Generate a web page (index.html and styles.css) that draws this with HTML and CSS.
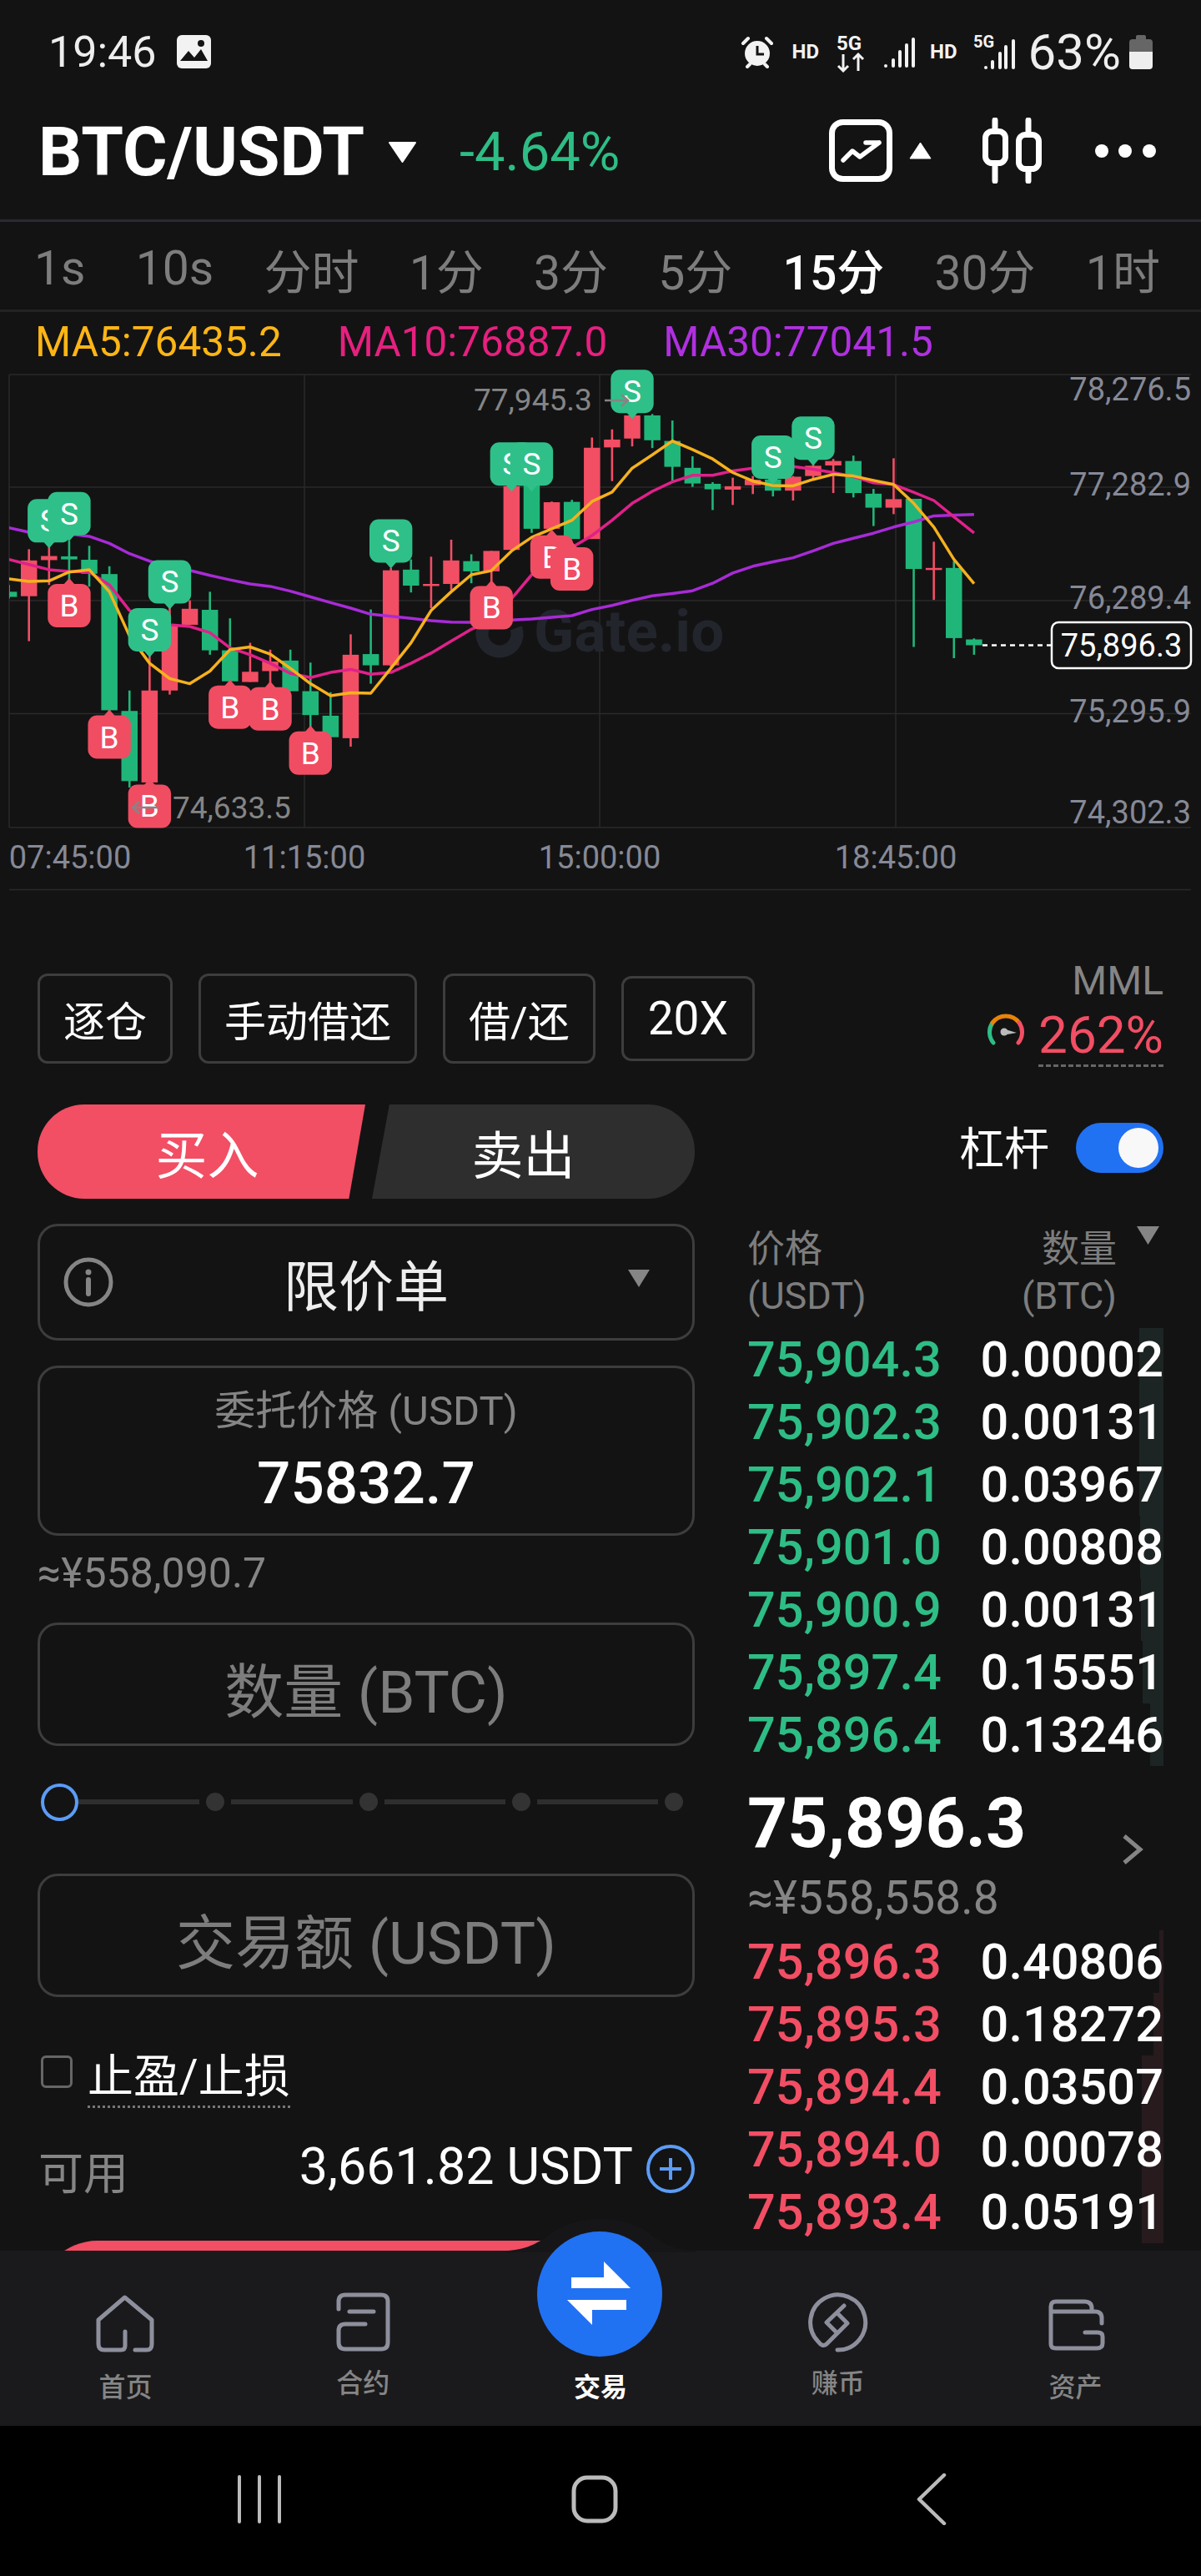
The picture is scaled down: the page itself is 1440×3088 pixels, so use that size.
FILE: index.html
```html
<!DOCTYPE html>
<html lang="zh">

<head>
    <meta charset="utf-8">
    <title>BTC/USDT</title>
    <link rel="stylesheet" href="styles.css">
</head>

<body>
    <div class="app">
        <div class="status-bar">
            <span class="status-time">19:46</span>
            <svg class="icon-gallery" width="41" height="40" viewBox="0 0 41 40">
                <rect width="41" height="40" rx="6" fill="#f2f2f2" />
                <path d="M4 31 L14 19 L21 27 L29 17 L37 31 Z" fill="#131314" />
                <circle cx="29" cy="10" r="4" fill="#131314" />
            </svg>
            <div class="status-right">
                <svg class="icon-alarm" width="40" height="40" viewBox="0 0 40 40">
                    <circle cx="20" cy="22" r="15" fill="#f2f2f2" />
                    <path d="M20 13 V23 H28" fill="none" stroke="#131314" stroke-width="3" />
                    <path d="M3 10 L9 4 M37 10 L31 4 M8 38 L11 35 M32 38 L29 35" stroke="#f2f2f2" stroke-width="4" stroke-linecap="round" />
                </svg>
                <span class="status-hd hd-first">HD</span>
                <svg class="net-first" width="36" height="52" viewBox="0 0 36 52">
                    <text class="net-label" x="1" y="24">5G</text>
                    <path d="M9 29 V49 M3 43 L9 49 L15 43 M27 49 V29 M21 35 L27 29 L33 35" fill="none" stroke="#f2f2f2" stroke-width="3" />
                </svg>
                <svg class="signal-first" width="40" height="37" viewBox="0 0 40 37" fill="#f2f2f2">
                    <rect x="2" y="32" width="4" height="4" rx="2" />
                    <rect x="11" y="25" width="4" height="11" rx="2" />
                    <rect x="19" y="15" width="4" height="21" rx="2" />
                    <rect x="27" y="7" width="4" height="29" rx="2" />
                    <rect x="35" y="0" width="4" height="36" rx="2" />
                </svg>
                <span class="status-hd hd-second">HD</span>
                <svg class="net-second" width="52" height="52" viewBox="0 0 52 52" fill="#f2f2f2">
                    <text class="net-label net-small" x="1" y="21">5G</text>
                    <rect x="14" y="43" width="4" height="4" rx="2" />
                    <rect x="22" y="36" width="4" height="11" rx="2" />
                    <rect x="31" y="26" width="4" height="21" rx="2" />
                    <rect x="38" y="18" width="4" height="29" rx="2" />
                    <rect x="47" y="11" width="4" height="36" rx="2" />
                </svg>
                <span class="status-battery">63%</span>
                <svg class="icon-battery" width="28" height="41" viewBox="0 0 28 41">
                    <path d="M8 5 V2 Q8 0 10 0 H18 Q20 0 20 2 V5 H24 Q28 5 28 9 V20 H0 V9 Q0 5 4 5 Z" fill="#666" />
                    <path d="M0 20 H28 V37 Q28 41 24 41 H4 Q0 41 0 37 Z" fill="#eee" />
                </svg>
            </div>
        </div>

        <div class="top-bar">
            <span class="pair-name">BTC/USDT</span>
            <svg class="pair-arrow" width="35" height="26" viewBox="0 0 35 26">
                <path d="M2 2 H33 L17.5 25 Z" fill="#fff" stroke="#fff" stroke-width="2" stroke-linejoin="round" />
            </svg>
            <span class="pair-change">-4.64%</span>
            <div class="top-actions">
                <svg width="76" height="75" viewBox="0 0 76 75">
                    <rect x="3.5" y="3.5" width="69" height="68" rx="13" fill="none" stroke="#fff" stroke-width="7" />
                    <path d="M17 49 L28 38 L37 45 L60 28 M44 28 H60" fill="none" stroke="#fff" stroke-width="5.5" stroke-linecap="round" stroke-linejoin="round" />
                </svg>
                <svg class="chart-arrow" width="27" height="21" viewBox="0 0 27 21">
                    <path d="M13.5 1 L26 20 H1 Z" fill="#fff" stroke="#fff" stroke-linejoin="round" />
                </svg>
                <svg class="candle-icon" width="72" height="79" viewBox="0 0 72 79">
                    <path d="M15 3 V76 M55 3 V76" stroke="#fff" stroke-width="7" stroke-linecap="round" />
                    <rect x="3.5" y="16.5" width="24" height="38" rx="8" fill="#131314" stroke="#fff" stroke-width="7" />
                    <rect x="43.5" y="20.5" width="24" height="41" rx="8" fill="#131314" stroke="#fff" stroke-width="7" />
                </svg>
                <svg class="more-icon" width="73" height="16" viewBox="0 0 73 16" fill="#fff">
                    <circle cx="8" cy="8" r="8" />
                    <circle cx="36" cy="8" r="8" />
                    <circle cx="65" cy="8" r="8" />
                </svg>
            </div>
        </div>

        <div class="period-bar">
            <span>1s</span>
            <span>10s</span>
            <span>分时</span>
            <span>1分</span>
            <span>3分</span>
            <span>5分</span>
            <span class="active">15分</span>
            <span>30分</span>
            <span>1时</span>
        </div>

        <div class="ma-row">
            <span class="ma5">MA5:76435.2</span>
            <span class="ma10">MA10:76887.0</span>
            <span class="ma30">MA30:77041.5</span>
        </div>

        <svg id="chart" class="chart" width="1440" height="640" viewBox="0 0 1440 640"></svg>

        <div class="trade">
            <div class="mode-row">
                <span class="mode-btn">逐仓</span>
                <span class="mode-btn">手动借还</span>
                <span class="mode-btn">借/还</span>
                <span class="mode-btn leverage">20X</span>
                <div class="mml">
                    <div class="mml-label">MML</div>
                    <div class="mml-value">
                        <svg class="mml-gauge" width="46" height="38" viewBox="0 0 46 38" fill="none" stroke-width="5" stroke-linecap="round">
                            <path d="M8 35 A20 20 0 0 1 7 11" stroke="#2ebd85" />
                            <path d="M7 11 A20 20 0 0 1 39 11" stroke="#e8830c" />
                            <path d="M39 11 A20 20 0 0 1 38 35" stroke="#f24e64" />
                            <path d="M19 18 L36 23 L19 26 Z" fill="#bbb" stroke="none" />
                            <circle cx="21" cy="22" r="4.5" fill="#bbb" stroke="none" />
                        </svg>
                        <span class="mml-percent">262%</span>
                    </div>
                </div>
            </div>

            <div class="trade-columns">
                <div class="form-col">
                    <div class="side-tabs">
                        <div class="side-tab buy">买入</div>
                        <div class="side-tab sell">卖出</div>
                    </div>

                    <div class="field order-type">
                        <svg class="info-icon" width="60" height="60" viewBox="0 0 60 60">
                            <circle cx="30" cy="30" r="27" fill="none" stroke="#858585" stroke-width="5" />
                            <circle cx="30" cy="18" r="3.5" fill="#858585" />
                            <path d="M30 27 V44" stroke="#858585" stroke-width="6" stroke-linecap="round" />
                        </svg>
                        <span class="order-type-name">限价单</span>
                        <svg class="order-type-arrow" width="28" height="23" viewBox="0 0 28 23">
                            <path d="M1 1 H27 L14 22 Z" fill="#858585" />
                        </svg>
                    </div>

                    <div class="field price-field">
                        <div class="price-label">委托价格 (USDT)</div>
                        <div class="price-value">75832.7</div>
                    </div>
                    <div class="price-hint">≈¥558,090.7</div>

                    <div class="field input-field">数量 (BTC)</div>

                    <div class="slider">
                        <span class="slider-handle"></span>
                        <span class="slider-seg"></span>
                        <span class="slider-dot"></span>
                        <span class="slider-seg"></span>
                        <span class="slider-dot"></span>
                        <span class="slider-seg"></span>
                        <span class="slider-dot"></span>
                        <span class="slider-seg"></span>
                        <span class="slider-dot"></span>
                    </div>

                    <div class="field input-field">交易额 (USDT)</div>

                    <div class="tpsl">
                        <span class="checkbox"></span>
                        <span class="tpsl-text">止盈/止损</span>
                    </div>

                    <div class="available">
                        <span class="available-label">可用</span>
                        <span class="available-value">3,661.82 USDT</span>
                        <svg width="58" height="58" viewBox="0 0 58 58" fill="none" stroke="#5b9cf5">
                            <circle cx="29" cy="29" r="27" stroke-width="4" />
                            <path d="M29 16 V42 M16 29 H42" stroke-width="4" />
                        </svg>
                    </div>

                    <div class="submit-btn"></div>
                </div>

                <div class="book-col">
                    <div class="leverage-row">
                        <span class="leverage-label">杠杆</span>
                        <span class="switch"><span class="switch-knob"></span></span>
                    </div>

                    <div class="book-head">
                        <div class="book-head-price">价格<br>(USDT)</div>
                        <div class="book-head-qty">数量<br>(BTC)</div>
                        <svg class="book-head-arrow" width="27" height="22" viewBox="0 0 27 22">
                            <path d="M0 0 H27 L13.5 22 Z" fill="#858585" />
                        </svg>
                    </div>

                    <div class="book-row bid"><span class="depth" style="width:29px"></span><span>75,904.3</span><span class="qty">0.00002</span></div>
                    <div class="book-row bid"><span class="depth" style="width:29px"></span><span>75,902.3</span><span class="qty">0.00131</span></div>
                    <div class="book-row bid"><span class="depth" style="width:29px"></span><span>75,902.1</span><span class="qty">0.03967</span></div>
                    <div class="book-row bid"><span class="depth" style="width:28px"></span><span>75,901.0</span><span class="qty">0.00808</span></div>
                    <div class="book-row bid"><span class="depth" style="width:27px"></span><span>75,900.9</span><span class="qty">0.00131</span></div>
                    <div class="book-row bid"><span class="depth" style="width:25px"></span><span>75,897.4</span><span class="qty">0.15551</span></div>
                    <div class="book-row bid"><span class="depth" style="width:16px"></span><span>75,896.4</span><span class="qty">0.13246</span></div>

                    <div class="book-mid">
                        <div class="book-mid-top">
                            <span class="last-price">75,896.3</span>
                            <svg class="last-chevron" width="26" height="38" viewBox="0 0 26 38">
                                <path d="M3 3 L22 19 L3 35" fill="none" stroke="#858585" stroke-width="5" />
                            </svg>
                        </div>
                        <div class="last-hint">≈¥558,558.8</div>
                    </div>

                    <div class="book-row ask"><span class="depth" style="width:5px"></span><span>75,896.3</span><span class="qty">0.40806</span></div>
                    <div class="book-row ask"><span class="depth" style="width:12px"></span><span>75,895.3</span><span class="qty">0.18272</span></div>
                    <div class="book-row ask"><span class="depth" style="width:26px"></span><span>75,894.4</span><span class="qty">0.03507</span></div>
                    <div class="book-row ask"><span class="depth" style="width:26px"></span><span>75,894.0</span><span class="qty">0.00078</span></div>
                    <div class="book-row ask"><span class="depth" style="width:26px"></span><span>75,893.4</span><span class="qty">0.05191</span></div>
                </div>
            </div>
        </div>

        <div class="nav">
            <svg class="nav-bump" width="230" height="40" viewBox="0 0 230 40">
                <path d="M0 40 V38 C25 38 40 28 50 22 C65 8 90 0 115 0 C140 0 165 8 180 22 C190 28 205 38 230 38 V40 Z" fill="#161618" />
            </svg>
            <div class="nav-fab">
                <svg width="150" height="150" viewBox="0 0 150 150">
                    <circle cx="75" cy="75" r="75" fill="#2171f3" />
                    <path d="M41 55 H80 V36 L112 68 H41 Z M107 82 H36 L66 112 V94 H107 Z" fill="#fff" />
                </svg>
            </div>
            <div class="nav-item">
                <svg width="72" height="72" viewBox="0 0 72 72" fill="none" stroke="#8d8f9c" stroke-width="5" stroke-linecap="round" stroke-linejoin="round">
                    <path d="M36 47 V64 Q36 69 31 69 H11 Q4 69 4 62 V33 L35.6 6 L68 33 V62 Q68 69 62 69 H48" />
                </svg>
                <span class="nav-label">首页</span>
            </div>
            <div class="nav-item nav-high">
                <svg width="72" height="72" viewBox="0 0 72 72" fill="none" stroke="#8d8f9c" stroke-width="5" stroke-linecap="round">
                    <path d="M7 20 V11 Q7 3 15 3 H58 Q66 3 66 11 V60 Q66 68 58 68 H15 Q7 68 7 60 V46 Q7 38 15 38 H39 M20 23 H49" />
                </svg>
                <span class="nav-label">合约</span>
            </div>
            <div class="nav-item">
                <div class="nav-spacer"></div>
                <span class="nav-label active">交易</span>
            </div>
            <div class="nav-item nav-high">
                <svg width="72" height="72" viewBox="0 0 72 72" fill="none" stroke="#8d8f9c" stroke-width="5" stroke-linecap="round" stroke-linejoin="round">
                    <path d="M43 16 L22 36 L33 47 M35 25 L47 37 L22 62 Q17 66 12 59 A33 33 0 1 1 35 69" />
                </svg>
                <span class="nav-label">赚币</span>
            </div>
            <div class="nav-item">
                <svg width="72" height="72" viewBox="0 0 72 72" fill="none" stroke="#8d8f9c" stroke-width="5" stroke-linecap="round" stroke-linejoin="round">
                    <path d="M6 23 V17 Q6 11 12 11 H46 Q55 11 55 19 V23 M67 37 V31 Q67 23 59 23 H6 M6 17 V62 Q6 67 12 67 H61 Q68 67 68 61 V53 Q68 48 62 48 H47" />
                </svg>
                <span class="nav-label">资产</span>
            </div>
        </div>

        <div class="sys-bar">
            <svg class="sys-recent" width="52" height="58" viewBox="0 0 52 58" stroke="#bbb" stroke-width="4" stroke-linecap="round">
                <path d="M2 2 V56 M26 2 V56 M50 2 V56" />
            </svg>
            <svg class="sys-home" width="56" height="58" viewBox="0 0 56 58">
                <rect x="3" y="3" width="50" height="52" rx="16" fill="none" stroke="#bbb" stroke-width="5" />
            </svg>
            <svg class="sys-back" width="36" height="62" viewBox="0 0 36 62">
                <path d="M33 2 L3 31 L33 60" fill="none" stroke="#bbb" stroke-width="4.5" stroke-linecap="round" stroke-linejoin="round" />
            </svg>
        </div>
    </div>

    <script src="chart.js"></script>
</body>

</html>
```

FILE: styles.css
```css
html,
body {
    margin: 0;
    background-color: #131314;
}

.app {
    width: 1440px;
    height: 3088px;
    display: flex;
    flex-direction: column;
    overflow: hidden;
    background-color: #131314;
    color: #ffffff;
    font-family: Roboto, 'Noto Sans CJK SC', sans-serif;
}

svg {
    display: block;
    flex-shrink: 0;
}

/* status bar */
.status-bar {
    height: 124px;
    flex-shrink: 0;
    box-sizing: border-box;
    display: flex;
    align-items: center;
    padding: 0 58px 0 58px;
    color: #eeeeee;
}

.status-time {
    font-size: 52px;
}

.icon-gallery {
    margin-left: 24px;
}

.status-right {
    margin-left: auto;
    display: flex;
    align-items: center;
}

.status-hd {
    font-size: 24px;
    font-weight: 700;
    color: #f2f2f2;
}

.hd-first {
    margin-left: 22px;
}

.net-first {
    margin-left: 20px;
}

.signal-first {
    margin-left: 20px;
    margin-top: 2px;
}

.hd-second {
    margin-left: 17px;
}

.net-second {
    margin-left: 18px;
}

.net-label {
    font-size: 24px;
    font-weight: 700;
    fill: #f2f2f2;
}

.net-small {
    font-size: 20px;
}

.status-battery {
    margin-left: 15px;
    font-size: 60px;
}

.icon-battery {
    margin-left: 10px;
}

/* pair header */
.top-bar {
    height: 142px;
    flex-shrink: 0;
    box-sizing: border-box;
    display: flex;
    align-items: center;
    padding: 0 54px 26px 46px;
    border-bottom: 3px solid #2a2a36;
}

.pair-name {
    font-size: 82px;
    font-weight: 700;
    margin-top: 2px;
}

.pair-arrow {
    margin-left: 28px;
    margin-top: 2px;
}

.pair-change {
    margin-left: 51px;
    font-size: 65px;
    color: #2ebd85;
    margin-top: 2px;
}

.top-actions {
    margin-left: auto;
    display: flex;
    align-items: center;
}

.chart-arrow {
    margin-left: 20px;
}

.candle-icon {
    margin-left: 61px;
}

.more-icon {
    margin-left: 63px;
}

/* periods */
.period-bar {
    height: 108px;
    flex-shrink: 0;
    box-sizing: border-box;
    display: flex;
    justify-content: space-between;
    align-items: center;
    padding: 6px 49px 0 41px;
    border-bottom: 3px solid #232325;
    font-size: 57px;
    color: #7d7d7d;
}

.period-bar .active {
    color: #ffffff;
    font-weight: 500;
}

.ma-row {
    height: 66px;
    flex-shrink: 0;
    box-sizing: border-box;
    display: flex;
    gap: 67px;
    padding: 6px 0 0 42px;
    align-items: center;
    font-size: 49.5px;
}

.ma5 {
    color: #fdb515;
}

.ma10 {
    color: #e6207f;
}

.ma30 {
    color: #b030e0;
}

/* chart */
.chart {
    flex-shrink: 0;
}

.chart text {
    font-family: Roboto, sans-serif;
}

.grid-line {
    stroke: #2a2a2a;
    stroke-width: 1.5;
}

.axis-label {
    font-size: 38px;
    fill: #868996;
}

.extreme-label {
    font-size: 37px;
    fill: #858585;
}

.extreme-arrow {
    fill: none;
    stroke: #858585;
    stroke-width: 2.5;
}

.marker-label {
    font-size: 37px;
    fill: #ffffff;
    text-anchor: middle;
}

.watermark {
    font-size: 71px;
    font-weight: 700;
    fill: #23252d;
}

.last-tag {
    fill: #131314;
    stroke: #ffffff;
    stroke-width: 2.5;
}

.last-tag-label {
    font-size: 38px;
    fill: #ffffff;
    text-anchor: middle;
}

.last-line {
    stroke: #ffffff;
    stroke-width: 2.5;
    stroke-dasharray: 6 5;
}

/* trade form */
.trade {
    flex: 1;
    min-height: 0;
    overflow: hidden;
    padding: 0 45px;
}

.mode-row {
    height: 108px;
    margin-top: 87px;
    margin-bottom: 49px;
    display: flex;
    align-items: center;
    gap: 31px;
}

.mode-btn {
    height: 108px;
    box-sizing: border-box;
    padding: 0 28px;
    display: flex;
    align-items: center;
    border: 3px solid #3d3d3d;
    border-radius: 12px;
    font-size: 50px;
}

.leverage {
    height: 102px;
    padding: 0 29px;
    font-size: 55px;
}

.mml {
    margin-left: auto;
    align-self: flex-start;
    margin-top: -19px;
    display: flex;
    flex-direction: column;
    align-items: flex-end;
}

.mml-label {
    font-size: 48px;
    line-height: 56px;
    color: #858585;
}

.mml-value {
    margin-top: 4px;
    display: flex;
    align-items: center;
    gap: 16px;
}

.mml-gauge {
    margin-top: -20px;
}

.mml-percent {
    font-size: 62px;
    line-height: 66px;
    color: #f24e64;
    border-bottom: 3px dashed #666666;
    padding-bottom: 2px;
}

.trade-columns {
    display: flex;
    gap: 63px;
}

.form-col {
    width: 788px;
    flex-shrink: 0;
}

.book-col {
    flex: 1;
    min-width: 0;
}

.side-tabs {
    display: flex;
    gap: 8px;
    margin-bottom: 30px;
}

.side-tab {
    height: 113px;
    box-sizing: border-box;
    display: flex;
    align-items: center;
    justify-content: center;
    font-size: 62px;
}

.buy {
    flex: 0 0 393px;
    padding-left: 14px;
    background-color: #f24e64;
    border-radius: 56px 0 0 56px;
    clip-path: polygon(0 0, 100% 0, 95% 100%, 0 100%);
}

.sell {
    flex: 1;
    padding-right: 24px;
    background-color: #2e2e2e;
    border-radius: 0 56px 56px 0;
    clip-path: polygon(5.4% 0, 100% 0, 100% 100%, 0 100%);
}

.field {
    box-sizing: border-box;
    border: 3px solid #3d3d3d;
    border-radius: 24px;
}

.order-type {
    height: 140px;
    margin-bottom: 30px;
    display: grid;
    grid-template-columns: 1fr auto 1fr;
    align-items: center;
}

.info-icon {
    margin-left: 28px;
}

.order-type-name {
    font-size: 66px;
    color: #eeeeee;
}

.order-type-arrow {
    justify-self: end;
    margin-right: 50px;
    margin-top: -10px;
}

.price-field {
    height: 204px;
    padding-top: 22px;
    text-align: center;
}

.price-label {
    font-size: 49px;
    line-height: 60px;
    color: #858585;
}

.price-value {
    margin-top: 16px;
    font-size: 71px;
    line-height: 80px;
    font-weight: 500;
}

.price-hint {
    height: 104px;
    padding: 15px 0 0 0;
    box-sizing: border-box;
    font-size: 50px;
    line-height: 60px;
    color: #858585;
}

.input-field {
    height: 148px;
    display: flex;
    align-items: center;
    justify-content: center;
    font-size: 71px;
    color: #7d7d7d;
    padding-top: 6px;
}

.slider {
    height: 153px;
    box-sizing: border-box;
    padding: 0 14px 19px 4px;
    display: flex;
    align-items: center;
    gap: 8px;
}

.slider-handle {
    width: 45px;
    height: 45px;
    box-sizing: border-box;
    border: 4px solid #5b9cf5;
    border-radius: 50%;
    margin-right: -8px;
    flex-shrink: 0;
}

.slider-seg {
    flex: 1;
    height: 6px;
    background-color: #2e2e2e;
}

.slider-dot {
    width: 22px;
    height: 22px;
    border-radius: 50%;
    background-color: #333333;
    flex-shrink: 0;
}

.tpsl {
    margin-top: 70px;
    display: flex;
    align-items: flex-start;
}

.checkbox {
    width: 38px;
    height: 39px;
    box-sizing: border-box;
    margin-left: 4px;
    border: 3px solid #666666;
    border-radius: 6px;
}

.tpsl-text {
    margin-left: 18px;
    font-size: 55px;
    line-height: 50px;
    padding-bottom: 10px;
    border-bottom: 3px dotted #777777;
}

.available {
    height: 64px;
    margin-top: 41px;
    display: flex;
    align-items: center;
}

.available-label {
    margin-left: 1px;
    margin-top: 2px;
    font-size: 54px;
    color: #858585;
}

.available-value {
    margin-left: auto;
    margin-right: 16px;
    margin-top: -6px;
    font-size: 61px;
}

.submit-btn {
    height: 144px;
    margin-top: 54px;
    border-radius: 72px;
    background-color: #f24e64;
}

/* order book */
.leverage-row {
    height: 146px;
    box-sizing: border-box;
    padding-top: 22px;
    display: flex;
    justify-content: flex-end;
    gap: 32px;
}

.leverage-label {
    font-size: 54px;
    line-height: 66px;
}

.switch {
    width: 105px;
    height: 60px;
    box-sizing: border-box;
    padding: 6px 6px;
    display: flex;
    justify-content: flex-end;
    border-radius: 30px;
    background-color: #2171f3;
}

.switch-knob {
    width: 48px;
    height: 48px;
    border-radius: 50%;
    background-color: #f8f8f8;
}

.book-head {
    height: 122px;
    display: flex;
    font-size: 45px;
    line-height: 56px;
    color: #7d7d7d;
}

.book-head-price {
    flex: 1;
}

.book-head-qty {
    text-align: right;
}

.book-head-arrow {
    margin-left: 24px;
    margin-right: 5px;
}

.book-row {
    position: relative;
    height: 75px;
    display: flex;
    justify-content: space-between;
    align-items: center;
    font-size: 59.5px;
    font-weight: 500;
}

.book-row span {
    position: relative;
}

.bid {
    color: #2ebd85;
}

.ask {
    color: #f24e64;
}

.qty {
    color: #ffffff;
}

.book-row .depth {
    position: absolute;
    top: 0;
    right: 0;
    bottom: 0;
}

.bid .depth {
    background-color: #1c2523;
}

.ask .depth {
    background-color: #271b1d;
}

.book-mid {
    height: 197px;
    box-sizing: border-box;
    padding-top: 18px;
}

.book-mid-top {
    height: 100px;
    display: flex;
    align-items: center;
    justify-content: space-between;
}

.last-price {
    font-size: 84px;
    font-weight: 700;
}

.last-chevron {
    margin-right: 24px;
    margin-top: 64px;
}

.last-hint {
    margin-top: 10px;
    font-size: 55px;
    line-height: 60px;
    color: #858585;
}

/* bottom nav */
.nav {
    position: relative;
    height: 210px;
    flex-shrink: 0;
    box-sizing: border-box;
    padding: 50px 8px 0;
    display: flex;
    background-color: #1a1a1c;
}

.nav-bump {
    position: absolute;
    left: 605px;
    top: -38px;
}

.nav-fab {
    position: absolute;
    left: 644px;
    top: -23px;
}

.nav-item {
    width: 285px;
    display: flex;
    flex-direction: column;
    align-items: center;
}

.nav-spacer {
    height: 72px;
}

.nav-label {
    margin-top: 22px;
    font-size: 32px;
    line-height: 40px;
    font-weight: 500;
    color: #858585;
}

.nav-high .nav-label {
    margin-top: 17px;
}

.nav-label.active {
    color: #ffffff;
    font-weight: 700;
}

/* android buttons */
.sys-bar {
    height: 180px;
    flex-shrink: 0;
    box-sizing: border-box;
    padding-bottom: 5px;
    display: flex;
    align-items: center;
    background-color: #000000;
}

.sys-recent {
    margin-left: 285px;
}

.sys-home {
    margin-left: 348px;
}

.sys-back {
    margin-left: 358px;
}
```

FILE: chart.js
```js
// candle data is in screen units of 2.45 per px, measured from the top of the chart
const SCALE = 2.45;
const STEP = 24.11;
const BODY = 19.5;
const GREEN = '#21b679';
const RED = '#f24e64';

// [wick top, body top, body bottom, wick bottom, colour]
const candles = [
    [640, 660, 675, 680, GREEN], [535, 568, 673, 805, RED], [515, 555, 567, 640, RED], [510, 556, 565, 640, GREEN],
    [525, 566, 607, 645, GREEN], [585, 608, 1008, 1010, GREEN], [950, 1010, 1216, 1235, GREEN], [840, 950, 1220, 1235, RED],
    [700, 755, 950, 962, RED], [685, 710, 757, 757, RED], [660, 713, 832, 845, GREEN], [738, 832, 923, 935, GREEN],
    [810, 895, 925, 925, RED], [830, 865, 893, 940, RED], [830, 862, 952, 952, GREEN], [868, 952, 1022, 1075, GREEN],
    [955, 1024, 1087, 1088, GREEN], [785, 845, 1090, 1115, RED], [712, 843, 876, 930, GREEN], [590, 597, 876, 880, RED],
    [565, 595, 642, 662, GREEN], [557, 637, 642, 708, RED], [507, 568, 637, 655, RED], [550, 570, 600, 635, GREEN],
    [540, 540, 600, 650, RED], [350, 350, 537, 540, RED], [345, 345, 475, 487, GREEN], [395, 397, 475, 475, RED],
    [390, 396, 505, 505, GREEN], [207, 237, 505, 505, RED], [183, 213, 236, 335, RED], [140, 142, 210, 233, RED],
    [138, 142, 215, 238, GREEN], [157, 217, 293, 333, GREEN], [262, 296, 342, 352, GREEN], [338, 343, 359, 420, GREEN],
    [325, 350, 360, 405, RED], [320, 331, 347, 373, RED], [320, 330, 363, 380, GREEN], [320, 322, 363, 392, RED],
    [270, 290, 320, 330, RED], [270, 276, 289, 370, RED], [260, 276, 370, 383, GREEN], [358, 372, 413, 467, GREEN],
    [268, 388, 413, 432, RED], [387, 387, 593, 822, GREEN], [513, 590, 594, 684, RED], [570, 590, 796, 855, GREEN],
    [797, 800, 817, 845, GREEN]
];

const ma5 = [622, 630, 628, 602, 595, 660, 790, 870, 915, 930, 893, 830, 822, 843, 885, 930, 965, 957, 958, 885, 810, 715, 660, 610, 598, 540, 500, 475, 450, 395, 367, 297, 258, 217, 242, 270, 310, 335, 348, 349, 330, 315, 320, 333, 345, 400, 470, 565, 636];
const ma10 = [565, 580, 595, 600, 602, 640, 715, 745, 757, 762, 780, 825, 845, 870, 900, 912, 897, 888, 902, 897, 870, 840, 805, 770, 745, 680, 610, 560, 530, 495, 450, 400, 365, 337, 318, 318, 305, 297, 295, 292, 300, 310, 322, 340, 345, 368, 392, 440, 487];
const ma30 = [472, 485, 493, 490, 497, 518, 548, 570, 585, 597, 612, 625, 637, 644, 658, 675, 692, 708, 726, 732, 738, 745, 749, 750, 745, 743, 740, 735, 730, 712, 700, 685, 672, 665, 657, 635, 605, 585, 572, 560, 540, 518, 503, 488, 470, 455, 437, 435, 433];

// [kind, candle index, top of the box]
const markers = [
    ['S', 2, 388], ['S', 3, 367], ['B', 3, 637], ['B', 5, 1023], ['S', 8, 567], ['S', 7, 708], ['B', 7, 1226],
    ['B', 11, 935], ['B', 13, 940], ['B', 15, 1070], ['S', 19, 447], ['B', 24, 643], ['S', 25, 221], ['S', 26, 221],
    ['B', 27, 494], ['B', 28, 529], ['S', 31, 8], ['S', 38, 201], ['S', 40, 145]
];

const grid = [
    [11, 9, 1428, 9], [11, 144, 1428, 144], [11, 280, 1428, 280], [11, 415.5, 1428, 415.5], [11, 552, 1428, 552],
    [11, 9, 11, 552], [365, 9, 365, 552], [719, 9, 719, 552], [1074, 9, 1074, 552], [11, 626.5, 1428, 626.5]
];

const axisLabels = [
    ['78,276.5', 40], ['77,282.9', 154], ['76,289.4', 290], ['75,295.9', 426], ['74,302.3', 547]
];

const timeLabels = [
    ['07:45:00', 84], ['11:15:00', 365], ['15:00:00', 719], ['18:45:00', 1074]
];

function candleX(i) {
    return 10.6 + STEP * i;
}

function drawCandle(c, i) {
    const x = candleX(i);
    return `<rect x="${x - 1.3}" y="${c[0] / SCALE}" width="2.6" height="${(c[3] - c[0]) / SCALE}" fill="${c[4]}"/>` +
        `<rect x="${x - BODY / 2}" y="${c[1] / SCALE}" width="${BODY}" height="${Math.max((c[2] - c[1]) / SCALE, 2.5)}" fill="${c[4]}"/>`;
}

function drawLine(values, colour) {
    const points = values.map((v, i) => `${candleX(i).toFixed(1)},${(v / SCALE).toFixed(1)}`).join(' ');
    return `<polyline points="${points}" fill="none" stroke="${colour}" stroke-width="3.5" stroke-linejoin="round"/>`;
}

function drawMarker(m) {
    const x = candleX(m[1]);
    const y = m[2] / SCALE;
    const isSell = m[0] === 'S';
    const tip = isSell ?
        `M${x - 7} ${y + 51} L${x} ${y + 59} L${x + 7} ${y + 51} Z` :
        `M${x - 7} ${y + 1} L${x} ${y - 7} L${x + 7} ${y + 1} Z`;
    const colour = isSell ? '#2fc08a' : '#f04d63';
    return `<path d="${tip}" fill="${colour}"/>` +
        `<rect x="${x - 25.7}" y="${y}" width="51.4" height="52" rx="11" fill="${colour}"/>` +
        `<text class="marker-label" x="${x}" y="${y + 39}">${m[0]}</text>`;
}

let html = '<defs><clipPath id="plot"><rect x="11" y="0" width="1417" height="560"/></clipPath></defs>';

html += grid.map(g => `<line class="grid-line" x1="${g[0]}" y1="${g[1]}" x2="${g[2]}" y2="${g[3]}"/>`).join('');

// watermark
html += '<circle cx="599" cy="320" r="21" fill="none" stroke="#23252d" stroke-width="15" stroke-dasharray="105 27" transform="rotate(-20 599 320)"/>';
html += '<text class="watermark" x="640" y="341">Gate.io</text>';

html += '<g clip-path="url(#plot)">';
html += candles.map(drawCandle).join('');
html += drawLine(ma30, '#a82bd6');
html += drawLine(ma10, '#e0218a');
html += drawLine(ma5, '#f5b11e');
html += markers.map(drawMarker).join('');
html += '</g>';

// high and low of the visible range
html += '<text class="extreme-label" x="568" y="52">77,945.3</text>';
html += '<path class="extreme-arrow" d="M725 40 H753 M745 33 L753 40 L745 47"/>';
html += '<text class="extreme-label" x="207" y="541">74,633.5</text>';
html += '<path class="extreme-arrow" d="M190 528 H159 M167 521 L159 528 L167 535"/>';

html += axisLabels.map(a => `<text class="axis-label" x="1428" y="${a[1]}" text-anchor="end">${a[0]}</text>`).join('');
html += timeLabels.map(t => `<text class="axis-label" x="${t[1]}" y="601" text-anchor="middle">${t[0]}</text>`).join('');

// last price
html += '<line class="last-line" x1="1178" y1="333.5" x2="1261" y2="333.5"/>';
html += '<rect class="last-tag" x="1261" y="306" width="167" height="55" rx="8"/>';
html += '<text class="last-tag-label" x="1344.5" y="347">75,896.3</text>';

document.getElementById('chart').innerHTML = html;
```
